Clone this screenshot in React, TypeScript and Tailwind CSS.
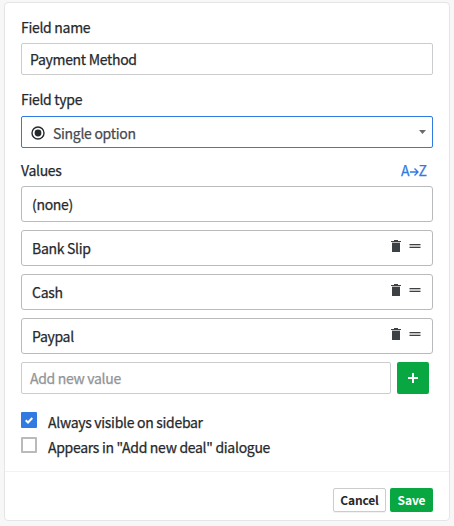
import React from 'react';

const options = ['Bank Slip', 'Cash', 'Paypal'];

function Trash() {
  return (
    <svg width="10" height="12" viewBox="0 0 10 12" className="block shrink-0" shapeRendering="crispEdges">
      <path d="M3 0h4v1h3v1H0V1h3z" fill="#3d4144" />
      <path d="M1 2h8v1H1z" fill="#b9bbbc" />
      <path d="M1 3h8v9H1z" fill="#3d4144" />
    </svg>
  );
}

function Handle() {
  return (
    <svg width="12" height="4" viewBox="0 0 12 4" className="block shrink-0">
      <path d="M.5 0h11v1H.5zM.5 3h11v1H.5z" fill="#3d4144" />
      <path d="M.5 1h11v2H.5z" fill="#c4c5c6" />
    </svg>
  );
}

function Label({ children }: { children: React.ReactNode }) {
  return <div className="h-5 leading-5">{children}</div>;
}

export default function App() {
  return (
    <div className="h-[526px] w-[454px] bg-[#f7f7f7] pt-[2px] pl-1 font-['Noto_Sans_CJK_SC','Noto_Sans_CJK_JP',sans-serif] text-[14px] font-normal tracking-[-0.3px] text-[#26292c] [-webkit-text-stroke:0.25px]">
      <div className="flex h-[519px] w-[446px] flex-col rounded-[4px] border border-[#e5e5e5] bg-white">
        <div className="h-[468px] px-4 pt-[14px]">
          <Label>Field name</Label>
          <div className="mt-[6px] flex h-8 items-center rounded-[2px] border border-[#cbcccd] px-2 pt-px">Payment Method</div>
          <div className="mt-[14px]"><Label>Field type</Label></div>
          <div className="mt-[7px] flex h-8 items-center rounded-[2px] border border-[#317ae2] pt-[3px] pr-[6px] pl-[9px] text-[#47494c]">
            <svg width="14" height="14" viewBox="0 0 14 14" className="mb-[2px]">
              <circle cx="7" cy="7" r="6" fill="none" stroke="#26292c" strokeWidth="1.4" />
              <circle cx="7" cy="7" r="3.4" fill="#26292c" />
            </svg>
            <span className="ml-2 flex-1">Single option</span>
            <svg width="7" height="4" viewBox="0 0 7 4" className="mb-[4px]"><path d="M0 0h7L3.5 4z" fill="#6b6b6b" /></svg>
          </div>
          <div className="mt-[12px] flex items-center justify-between pr-[6px]">
            <Label>Values</Label>
            <div className="flex h-5 items-center leading-5 tracking-normal text-[#317ae2]">
              A
              <svg width="9" height="10" viewBox="0 0 9 10" className="mt-[3px]" fill="none" stroke="#317ae2" strokeWidth="1.4"><path d="M0 5h8M4.5 1.5 8 5 4.5 8.5" /></svg>
              Z
            </div>
          </div>
          <div className="mt-[6px] flex flex-col gap-2">
            <div className="flex h-9 items-center rounded-[3px] border border-[#b9babb] pt-px pl-[10px]">(none)</div>
            {options.map((value) => (
              <div key={value} className="flex h-9 items-center rounded-[3px] border border-[#b9babb] pr-[11px] pl-[10px]">
                <span className="flex-1 pt-px">{value}</span>
                <div className="mb-[4px] flex items-center gap-2"><Trash /><Handle /></div>
              </div>
            ))}
          </div>
          <div className="mt-2 flex gap-[6px]">
            <div className="flex h-8 w-[370px] items-center rounded-[2px] border border-[#cbcccd] px-2 pt-px text-[#929496]">Add new value</div>
            <button className="flex h-8 w-8 items-center justify-center rounded-[2px] bg-[#08a742]">
              <svg width="10" height="10" viewBox="0 0 10 10"><path d="M4 0h2v4h4v2H6v4H4V6H0V4h4z" fill="white" /></svg>
            </button>
          </div>
          <div className="mt-[18px] flex h-[25px] items-start">
            <span className="flex h-4 w-4 items-center justify-center rounded-[1px] bg-[#317ae2]">
              <svg width="8" height="7" viewBox="0 0 8 7" fill="none" stroke="white" strokeWidth="2"><path d="m.7 3.3 2.3 2.2L7.3 1" /></svg>
            </span>
            <span className="ml-[11px] leading-[20px]">Always visible on sidebar</span>
          </div>
          <div className="flex h-[25px] items-start">
            <span className="h-4 w-4 rounded-[1px] border-2 border-[#b9babb]" />
            <span className="ml-[11px] leading-[20px]">Appears in "Add new deal" dialogue</span>
          </div>
        </div>
        <div className="flex flex-1 items-start justify-end gap-1 border-t border-[#f2f2f2] pt-4 pr-4 text-[12px] leading-6 font-bold tracking-[-0.15px] [-webkit-text-stroke:0px]">
          <button className="flex h-6 w-[53px] items-center justify-center rounded-[2px] border border-[#cbcccd] shadow-[0_1px_1px_rgba(0,0,0,0.06)]">Cancel</button>
          <button className="flex h-6 w-[43px] items-center justify-center rounded-[2px] bg-[#08a742] text-white">Save</button>
        </div>
      </div>
    </div>
  );
}
